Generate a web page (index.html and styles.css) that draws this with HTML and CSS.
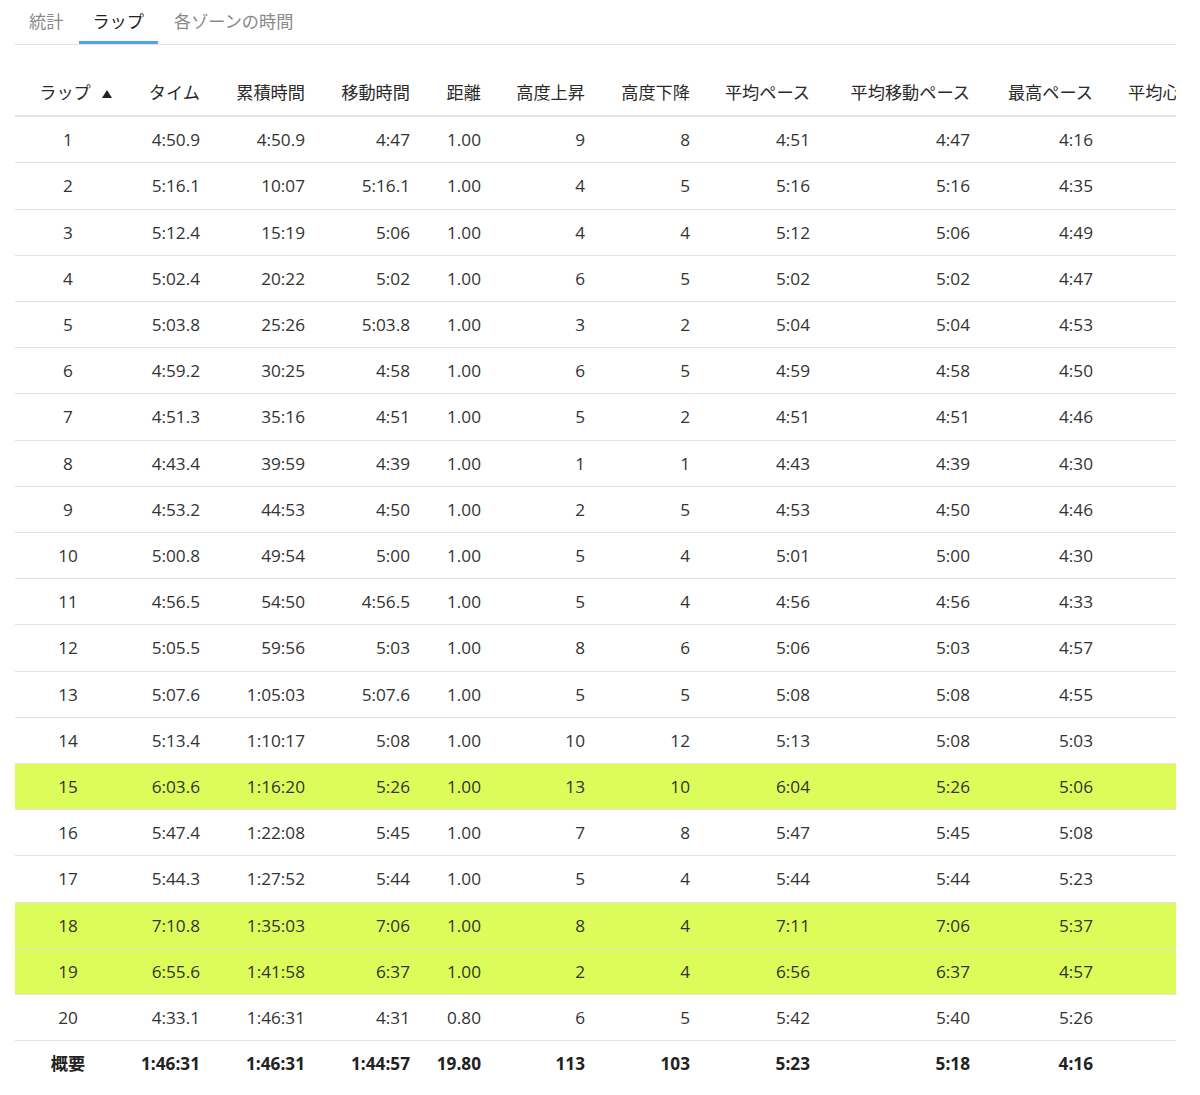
FILE: index.html
```html
<!DOCTYPE html>
<html lang="ja">
<head>
<meta charset="utf-8">
<link rel="stylesheet" href="styles.css">
</head>
<body>
<div class="page">
  <div class="tabs">
    <div class="tab">統計</div>
    <div class="tab active">ラップ</div>
    <div class="tab">各ゾーンの時間</div>
  </div>
  <div class="table-wrap">
    <table class="laps">
      <colgroup>
        <col class="c-lap"><col class="c-time"><col class="c-cum"><col class="c-move"><col class="c-dist"><col class="c-up"><col class="c-down"><col class="c-pace"><col class="c-mpace"><col class="c-best"><col class="c-hr">
      </colgroup>
      <thead>
        <tr>
          <th class="lap"><span class="sorted">ラップ</span></th>
          <th>タイム</th><th>累積時間</th><th>移動時間</th><th>距離</th><th>高度上昇</th><th>高度下降</th><th>平均ペース</th><th>平均移動ペース</th><th>最高ペース</th><th class="hr">平均心拍</th>
        </tr>
      </thead>
      <tbody>
        <tr><td class="lap">1</td><td>4:50.9</td><td>4:50.9</td><td>4:47</td><td>1.00</td><td>9</td><td>8</td><td>4:51</td><td>4:47</td><td>4:16</td><td class="hr"></td></tr>
        <tr><td class="lap">2</td><td>5:16.1</td><td>10:07</td><td>5:16.1</td><td>1.00</td><td>4</td><td>5</td><td>5:16</td><td>5:16</td><td>4:35</td><td class="hr"></td></tr>
        <tr><td class="lap">3</td><td>5:12.4</td><td>15:19</td><td>5:06</td><td>1.00</td><td>4</td><td>4</td><td>5:12</td><td>5:06</td><td>4:49</td><td class="hr"></td></tr>
        <tr><td class="lap">4</td><td>5:02.4</td><td>20:22</td><td>5:02</td><td>1.00</td><td>6</td><td>5</td><td>5:02</td><td>5:02</td><td>4:47</td><td class="hr"></td></tr>
        <tr><td class="lap">5</td><td>5:03.8</td><td>25:26</td><td>5:03.8</td><td>1.00</td><td>3</td><td>2</td><td>5:04</td><td>5:04</td><td>4:53</td><td class="hr"></td></tr>
        <tr><td class="lap">6</td><td>4:59.2</td><td>30:25</td><td>4:58</td><td>1.00</td><td>6</td><td>5</td><td>4:59</td><td>4:58</td><td>4:50</td><td class="hr"></td></tr>
        <tr><td class="lap">7</td><td>4:51.3</td><td>35:16</td><td>4:51</td><td>1.00</td><td>5</td><td>2</td><td>4:51</td><td>4:51</td><td>4:46</td><td class="hr"></td></tr>
        <tr><td class="lap">8</td><td>4:43.4</td><td>39:59</td><td>4:39</td><td>1.00</td><td>1</td><td>1</td><td>4:43</td><td>4:39</td><td>4:30</td><td class="hr"></td></tr>
        <tr><td class="lap">9</td><td>4:53.2</td><td>44:53</td><td>4:50</td><td>1.00</td><td>2</td><td>5</td><td>4:53</td><td>4:50</td><td>4:46</td><td class="hr"></td></tr>
        <tr><td class="lap">10</td><td>5:00.8</td><td>49:54</td><td>5:00</td><td>1.00</td><td>5</td><td>4</td><td>5:01</td><td>5:00</td><td>4:30</td><td class="hr"></td></tr>
        <tr><td class="lap">11</td><td>4:56.5</td><td>54:50</td><td>4:56.5</td><td>1.00</td><td>5</td><td>4</td><td>4:56</td><td>4:56</td><td>4:33</td><td class="hr"></td></tr>
        <tr><td class="lap">12</td><td>5:05.5</td><td>59:56</td><td>5:03</td><td>1.00</td><td>8</td><td>6</td><td>5:06</td><td>5:03</td><td>4:57</td><td class="hr"></td></tr>
        <tr><td class="lap">13</td><td>5:07.6</td><td>1:05:03</td><td>5:07.6</td><td>1.00</td><td>5</td><td>5</td><td>5:08</td><td>5:08</td><td>4:55</td><td class="hr"></td></tr>
        <tr><td class="lap">14</td><td>5:13.4</td><td>1:10:17</td><td>5:08</td><td>1.00</td><td>10</td><td>12</td><td>5:13</td><td>5:08</td><td>5:03</td><td class="hr"></td></tr>
        <tr class="hl"><td class="lap">15</td><td>6:03.6</td><td>1:16:20</td><td>5:26</td><td>1.00</td><td>13</td><td>10</td><td>6:04</td><td>5:26</td><td>5:06</td><td class="hr"></td></tr>
        <tr><td class="lap">16</td><td>5:47.4</td><td>1:22:08</td><td>5:45</td><td>1.00</td><td>7</td><td>8</td><td>5:47</td><td>5:45</td><td>5:08</td><td class="hr"></td></tr>
        <tr><td class="lap">17</td><td>5:44.3</td><td>1:27:52</td><td>5:44</td><td>1.00</td><td>5</td><td>4</td><td>5:44</td><td>5:44</td><td>5:23</td><td class="hr"></td></tr>
        <tr class="hl"><td class="lap">18</td><td>7:10.8</td><td>1:35:03</td><td>7:06</td><td>1.00</td><td>8</td><td>4</td><td>7:11</td><td>7:06</td><td>5:37</td><td class="hr"></td></tr>
        <tr class="hl"><td class="lap">19</td><td>6:55.6</td><td>1:41:58</td><td>6:37</td><td>1.00</td><td>2</td><td>4</td><td>6:56</td><td>6:37</td><td>4:57</td><td class="hr"></td></tr>
        <tr><td class="lap">20</td><td>4:33.1</td><td>1:46:31</td><td>4:31</td><td>0.80</td><td>6</td><td>5</td><td>5:42</td><td>5:40</td><td>5:26</td><td class="hr"></td></tr>
        <tr class="summary"><td class="lap">概要</td><td>1:46:31</td><td>1:46:31</td><td>1:44:57</td><td>19.80</td><td>113</td><td>103</td><td>5:23</td><td>5:18</td><td>4:16</td><td class="hr"></td></tr>
      </tbody>
    </table>
  </div>
</div>
</body>
</html>
```

FILE: styles.css
```css
html, body {
  margin: 0;
  padding: 0;
  background: #fff;
}

body {
  font-family: "Open Sans", "Noto Sans CJK JP", sans-serif;
  font-size: 17.2px;
  color: #333;
}

.page {
  padding: 0 24px 0 15px;
}

.tabs {
  display: flex;
  border-bottom: 1px solid #e2e2e2;
  height: 44px;
}

.tab {
  padding: 9px 14px 0 14px;
  line-height: 25px;
  color: #8a8a8a;
  border-bottom: 3px solid transparent;
  height: 32px;
  margin-right: 2px;
}

.tab.active {
  color: #222;
  padding-left: 13px;
  padding-right: 14px;
  border-bottom-color: #4aa8e8;
}

.table-wrap {
  margin-top: 25px;
  width: 1161px;
  overflow: hidden;
}

.laps {
  border-collapse: collapse;
  table-layout: fixed;
  width: 1241px;
}

.c-lap { width: 106px; }
.c-time { width: 92px; }
.c-cum { width: 105px; }
.c-move { width: 105px; }
.c-dist { width: 71px; }
.c-up { width: 104px; }
.c-down { width: 105px; }
.c-pace { width: 120px; }
.c-mpace { width: 160px; }
.c-best { width: 123px; }
.c-hr { width: 150px; }

.laps th,
.laps td {
  padding: 10px 13px 10px 0;
  line-height: 25.2px;
  text-align: right;
  white-space: nowrap;
  border-bottom: 1px solid #e2e2e2;
}

.laps th {
  font-weight: normal;
  color: #2a2a2a;
  border-bottom: 2px solid #e6e6e6;
}

.laps th.lap,
.laps td.lap {
  text-align: center;
  padding: 10px 0;
}

.laps th.lap {
  padding-right: 6px;
}

.laps th.hr,
.laps td.hr {
  text-align: left;
  padding-left: 22px;
  padding-right: 0;
}

.sorted {
  position: relative;
}

.sorted::after {
  content: "";
  position: absolute;
  left: calc(100% + 11px);
  top: 9px;
  width: 0;
  height: 0;
  border-left: 5px solid transparent;
  border-right: 5px solid transparent;
  border-bottom: 8px solid #222;
}

.laps tr.hl td {
  background: #ddfc5a;
}

.laps tr.summary td {
  font-weight: bold;
  border-bottom: none;
  color: #222;
}
```
